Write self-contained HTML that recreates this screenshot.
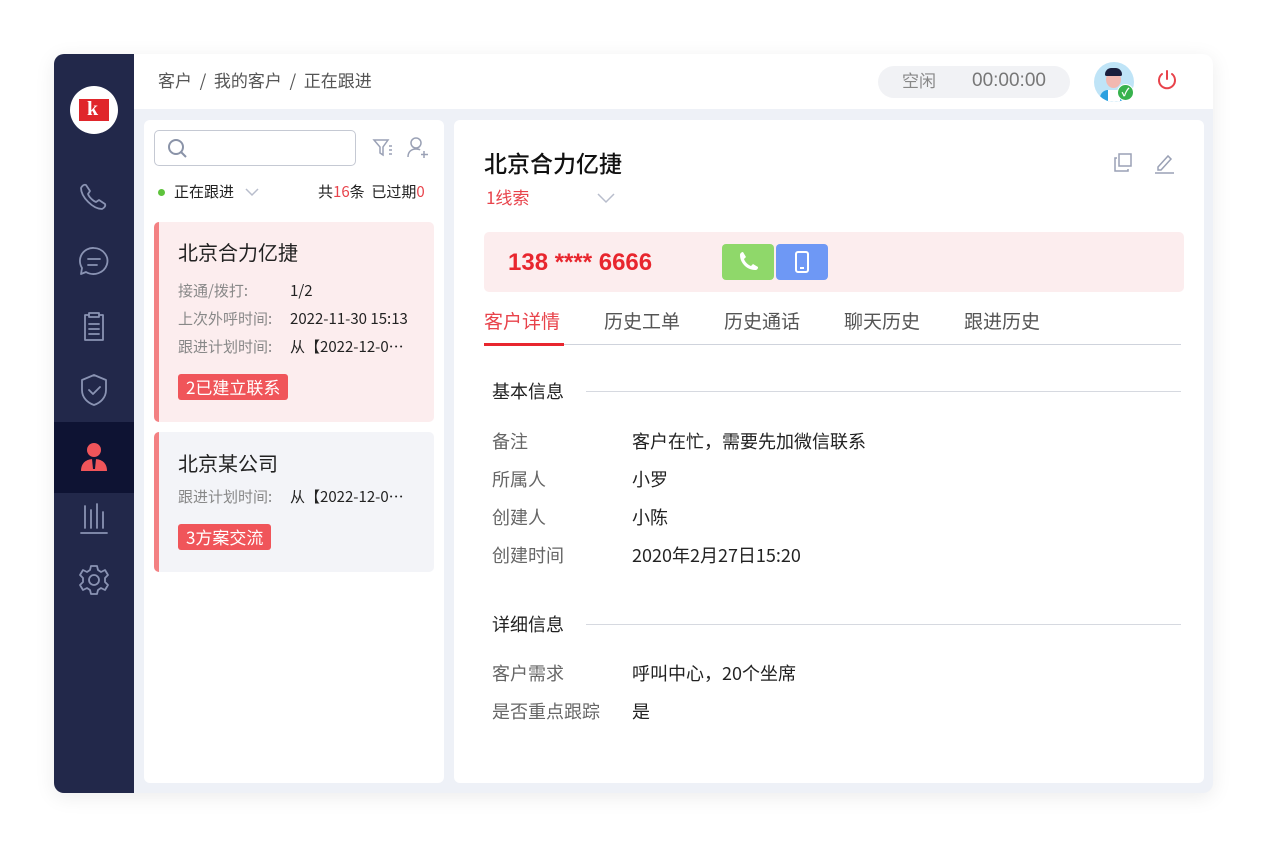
<!DOCTYPE html>
<html><head><meta charset="utf-8">
<style>
*{margin:0;padding:0;box-sizing:border-box}
body{width:1268px;height:848px;background:#fff;font-family:"Noto Sans CJK SC","Liberation Sans",sans-serif;line-height:1.2;position:relative;overflow:hidden;color:#222}
.abs{position:absolute}
.frame{left:54px;top:54px;width:1159px;height:739px;border-radius:10px;overflow:hidden;background:#eef1f7;box-shadow:0 4px 20px rgba(0,0,0,.08)}
.side{left:0;top:0;width:80px;height:739px;background:#22284a}
.hdr{left:80px;top:0;width:1079px;height:55px;background:#fff}
.panel{background:#fff;border-radius:6px}
.ic{stroke:#8a93b3;fill:none;stroke-width:1.8;stroke-linecap:round;stroke-linejoin:round}
.t{font-size:18px;color:#666}
.v{font-size:18px;color:#222}
.s{font-size:15px;color:#888}
</style></head><body>
<div class="abs frame">
 <div class="abs side">
  <div class="abs" style="left:16px;top:32px;width:48px;height:48px;border-radius:50%;background:#fff"></div>
  <div class="abs" style="left:25px;top:45px;width:30px;height:22px;background:#e0262b"></div>
  <div class="abs" style="left:33px;top:43px;color:#fff;font-weight:bold;font-size:20px;font-family:'Liberation Serif',serif">k</div>
  <svg class="abs" style="left:22px;top:126px" width="36" height="36" viewBox="0 0 36 36"><path class="ic" d="M5 8c1-2 3-4 5-3l4 6-2 3c1 3 5 7 8 8l3-2 6 4c1 2-1 4-3 5-9 0-21-12-21-21z"/></svg>
  <svg class="abs" style="left:22px;top:190px" width="36" height="36" viewBox="0 0 36 36"><path class="ic" d="M18 4a14 13 0 1 1-8 24l-5 2 1-6A13 13 0 0 1 18 4zM12 15h12M12 21h9"/></svg>
  <svg class="abs" style="left:22px;top:254px" width="36" height="36" viewBox="0 0 36 36"><path class="ic" d="M13 5h10v4H13zM13 7H9v25h18V7h-4M13 16h10M13 21h10M13 26h10"/></svg>
  <svg class="abs" style="left:22px;top:318px" width="36" height="36" viewBox="0 0 36 36"><path class="ic" d="M18 3l12 5v10c0 8-6 13-12 15C12 31 6 26 6 18V8zM13 18l4 4 7-7"/></svg>
  <div class="abs" style="left:0;top:368px;width:80px;height:71px;background:#0e1333"></div>
  <svg class="abs" style="left:22px;top:385px" width="36" height="36" viewBox="0 0 36 36"><circle cx="18" cy="11" r="7" fill="#f0555a"/><path d="M5 32c0-8 5-12 13-12s13 4 13 12z" fill="#f0555a"/><path d="M16 20h4l-1 10h-2z" fill="#0e1333"/></svg>
  <svg class="abs" style="left:22px;top:446px" width="36" height="36" viewBox="0 0 36 36"><path class="ic" d="M9 6v22M15 10v18M21 4v24M27 12v16M5 33h26"/></svg>
  <svg class="abs" style="left:22px;top:508px" width="36" height="36" viewBox="0 0 36 36"><circle class="ic" cx="18" cy="18" r="5"/><path class="ic" d="M15 4h6l1 4 3 2 4-2 3 5-3 3v4l3 3-3 5-4-2-3 2-1 4h-6l-1-4-3-2-4 2-3-5 3-3v-4l-3-3 3-5 4 2 3-2z"/></svg>
 </div>
 <div class="abs hdr">
  <div class="abs" style="left:24px;top:16px;font-size:17px;color:#555">客户 &nbsp;/ &nbsp;我的客户 &nbsp;/ &nbsp;正在跟进</div>
  <div class="abs" style="left:744px;top:12px;width:192px;height:32px;border-radius:16px;background:#f1f2f5"></div>
  <div class="abs" style="left:768px;top:16px;font-size:17px;color:#888">空闲</div>
  <div class="abs" style="left:838px;top:16px;font-size:19px;color:#777;font-family:'Liberation Sans',sans-serif">00:00:00</div>
  <div class="abs" style="left:960px;top:8px;width:40px;height:40px;border-radius:50%;background:#bfe4f7;overflow:hidden">
   <div class="abs" style="left:12px;top:9px;width:15px;height:17px;border-radius:50%;background:#f2b8b0"></div>
   <div class="abs" style="left:11px;top:6px;width:17px;height:8px;border-radius:8px 8px 2px 2px;background:#1a1f3d"></div>
   <div class="abs" style="left:6px;top:28px;width:28px;height:14px;border-radius:8px 8px 0 0;background:#2aa0e0"></div>
   <div class="abs" style="left:14px;top:28px;width:12px;height:14px;background:#fff"></div>
  </div>
  <div class="abs" style="left:983px;top:30px;width:17px;height:17px;border-radius:50%;background:#37b24d;border:1.5px solid #fff;color:#fff;font-size:11px;line-height:14px;text-align:center;font-weight:bold">✓</div>
  <svg class="abs" style="left:1022px;top:15px" width="22" height="22" viewBox="0 0 22 22"><path d="M6 5a8 8 0 1 0 10 0M11 2v8" stroke="#e8434b" stroke-width="2" fill="none" stroke-linecap="round"/></svg>
 </div>
 <div class="abs panel" style="left:90px;top:66px;width:300px;height:663px">
  <div class="abs" style="left:10px;top:10px;width:202px;height:36px;border:1px solid #c5c9d3;border-radius:5px"></div>
  <svg class="abs" style="left:22px;top:17px" width="24" height="24" viewBox="0 0 24 24"><circle cx="10" cy="10" r="7" stroke="#8a93a8" stroke-width="2" fill="none"/><path d="M15 15l5 5" stroke="#8a93a8" stroke-width="2"/></svg>
  <svg class="abs" style="left:228px;top:17px" width="22" height="22" viewBox="0 0 22 22"><path d="M2 3h14l-5 7v8l-3-2v-6z M17 9h3M17 13h3M17 17h3" stroke="#9aa1b5" stroke-width="1.5" fill="none"/></svg>
  <svg class="abs" style="left:262px;top:16px" width="24" height="24" viewBox="0 0 24 24"><circle cx="10" cy="7" r="5" stroke="#9aa1b5" stroke-width="1.5" fill="none"/><path d="M2 21c0-5 3-8 8-8 2 0 3 0 4 1M18 15v7M15 18.5h7" stroke="#9aa1b5" stroke-width="1.5" fill="none"/></svg>
  <div class="abs" style="left:14px;top:69px;width:7px;height:7px;border-radius:50%;background:#5ec33c"></div>
  <div class="abs" style="left:30px;top:63px;font-size:15px;color:#222">正在跟进</div>
  <svg class="abs" style="left:100px;top:67px" width="16" height="10" viewBox="0 0 16 10"><path d="M2 2l6 6 6-6" stroke="#b8bdcc" stroke-width="1.5" fill="none"/></svg>
  <div class="abs" style="left:174px;top:63px;font-size:15px;color:#222">共<span style="color:#e8434b">16</span>条 &nbsp;已过期<span style="color:#e8434b">0</span></div>
  <div class="abs" style="left:10px;top:102px;width:280px;height:200px;background:#fcedee;border-radius:5px;border-left:5px solid #f38183"></div>
  <div class="abs" style="left:34px;top:120px;font-size:20px;color:#222">北京合力亿捷</div>
  <div class="abs s" style="left:34px;top:162px">接通/拨打:</div><div class="abs" style="left:146px;top:162px;font-size:15px">1/2</div>
  <div class="abs s" style="left:34px;top:190px">上次外呼时间:</div><div class="abs" style="left:146px;top:190px;font-size:15px">2022-11-30 15:13</div>
  <div class="abs s" style="left:34px;top:218px">跟进计划时间:</div><div class="abs" style="left:146px;top:218px;font-size:15px">从【2022-12-0…</div>
  <div class="abs" style="left:34px;top:254px;height:26px;padding:0 8px;background:#f0555a;color:#fff;font-size:17px;line-height:26px;border-radius:3px">2已建立联系</div>
  <div class="abs" style="left:10px;top:312px;width:280px;height:140px;background:#f3f4f8;border-radius:5px;border-left:5px solid #f38183"></div>
  <div class="abs" style="left:34px;top:331px;font-size:20px;color:#222">北京某公司</div>
  <div class="abs s" style="left:34px;top:368px">跟进计划时间:</div><div class="abs" style="left:146px;top:368px;font-size:15px">从【2022-12-0…</div>
  <div class="abs" style="left:34px;top:404px;height:26px;padding:0 8px;background:#f0555a;color:#fff;font-size:17px;line-height:26px;border-radius:3px">3方案交流</div>
 </div>
 <div class="abs panel" style="left:400px;top:66px;width:750px;height:663px">
  <div class="abs" style="left:30px;top:29px;font-size:23px;color:#111;font-weight:500">北京合力亿捷</div>
  <div class="abs" style="left:32px;top:67px;font-size:17px;color:#e8434b">1线索</div>
  <svg class="abs" style="left:142px;top:72px" width="20" height="12" viewBox="0 0 20 12"><path d="M2 2l8 8 8-8" stroke="#b8bdcc" stroke-width="1.5" fill="none"/></svg>
  <svg class="abs" style="left:658px;top:32px" width="22" height="22" viewBox="0 0 22 22"><rect x="7" y="2" width="12" height="12" stroke="#9aa1b5" stroke-width="1.5" fill="none"/><path d="M5 6H3v13h13v-2" stroke="#9aa1b5" stroke-width="1.5" fill="none"/></svg>
  <svg class="abs" style="left:698px;top:31px" width="24" height="24" viewBox="0 0 24 24"><path d="M6 16l10-11 3 3-10 11H6zM3 22h19" stroke="#9aa1b5" stroke-width="1.5" fill="none"/></svg>
  <div class="abs" style="left:30px;top:112px;width:700px;height:60px;background:#fcedee;border-radius:5px"></div>
  <div class="abs" style="left:54px;top:129px;font-size:24px;font-weight:bold;color:#e8262e;font-family:'Liberation Sans',sans-serif">138 **** 6666</div>
  <div class="abs" style="left:268px;top:124px;width:52px;height:36px;background:#8fd86a;border-radius:4px"></div>
  <svg class="abs" style="left:282px;top:130px" width="24" height="24" viewBox="0 0 24 24"><path d="M4 5c0-2 2-3 3-3l3 5-2 2c1 3 4 6 7 7l2-2 5 3c0 2-1 3-3 3C11 20 4 13 4 5z" fill="#fff"/></svg>
  <div class="abs" style="left:322px;top:124px;width:52px;height:36px;background:#6e98f5;border-radius:4px"></div>
  <div class="abs" style="left:341px;top:131px;width:14px;height:22px;border:2px solid #fff;border-radius:3px"></div>
  <div class="abs" style="left:346px;top:147px;width:4px;height:2px;background:#fff"></div>
  <div class="abs" style="left:30px;top:190px;font-size:19px;color:#e8434b">客户详情</div>
  <div class="abs" style="left:150px;top:190px;font-size:19px;color:#555">历史工单</div>
  <div class="abs" style="left:270px;top:190px;font-size:19px;color:#555">历史通话</div>
  <div class="abs" style="left:390px;top:190px;font-size:19px;color:#555">聊天历史</div>
  <div class="abs" style="left:510px;top:190px;font-size:19px;color:#555">跟进历史</div>
  <div class="abs" style="left:30px;top:224px;width:697px;height:1px;background:#cfd3dc"></div>
  <div class="abs" style="left:30px;top:223px;width:80px;height:3px;background:#e8262e"></div>
  <div class="abs" style="left:38px;top:261px;font-size:18px;color:#222">基本信息</div>
  <div class="abs" style="left:132px;top:271px;width:595px;height:1px;background:#d6d9e0"></div>
  <div class="abs t" style="left:38px;top:311px">备注</div><div class="abs v" style="left:178px;top:311px">客户在忙，需要先加微信联系</div>
  <div class="abs t" style="left:38px;top:349px">所属人</div><div class="abs v" style="left:178px;top:349px">小罗</div>
  <div class="abs t" style="left:38px;top:387px">创建人</div><div class="abs v" style="left:178px;top:387px">小陈</div>
  <div class="abs t" style="left:38px;top:425px">创建时间</div><div class="abs v" style="left:178px;top:425px">2020年2月27日15:20</div>
  <div class="abs" style="left:38px;top:494px;font-size:18px;color:#222">详细信息</div>
  <div class="abs" style="left:132px;top:504px;width:595px;height:1px;background:#d6d9e0"></div>
  <div class="abs t" style="left:38px;top:543px">客户需求</div><div class="abs v" style="left:178px;top:543px">呼叫中心，20个坐席</div>
  <div class="abs t" style="left:38px;top:581px">是否重点跟踪</div><div class="abs v" style="left:178px;top:581px">是</div>
 </div>
</div>
</body></html>
